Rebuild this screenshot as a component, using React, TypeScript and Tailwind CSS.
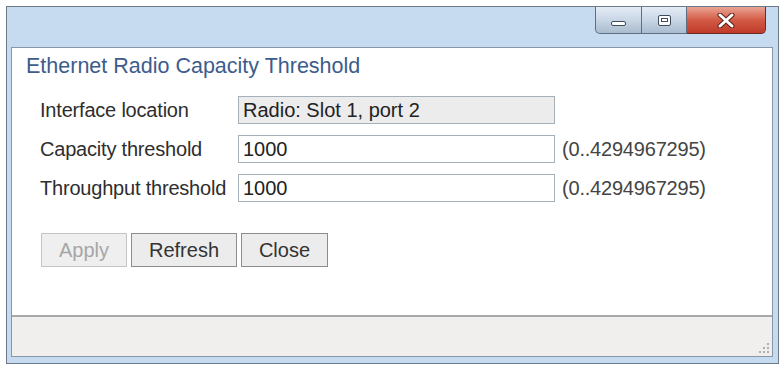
import React from 'react'

const font = { fontFamily: '"Liberation Sans", Arial, sans-serif' }

function TitleButtons() {
  return (
    <div className="flex h-[27px] self-start mr-[7px]">
      <div className="w-[47px] h-full rounded-bl-[5px] border border-t-0 border-[#5f6e80] bg-gradient-to-b from-[#e4ecf5] via-[#c9d6e5] to-[#a9bccf] flex items-center justify-center">
        <div className="w-[15px] h-[5px] mt-[6px] rounded-[2px] border border-[#3f4c5c] bg-white" />
      </div>
      <div className="w-[45px] h-full border-b border-r border-[#5f6e80] bg-gradient-to-b from-[#e4ecf5] via-[#c9d6e5] to-[#a9bccf] flex items-center justify-center">
        <div className="w-[13px] h-[11px] rounded-[2px] border border-[#3f4c5c] bg-white flex items-center justify-center">
          <div className="w-[7px] h-[4px] border border-[#3f4c5c]" />
        </div>
      </div>
      <div className="w-[79px] h-full rounded-br-[5px] border border-l-0 border-t-0 border-[#6b2a22] bg-gradient-to-b from-[#e9a394] via-[#d25a45] to-[#c0392a] flex items-center justify-center">
        <svg width="18" height="15" viewBox="0 0 18 15">
          <path d="M3 2 L15 13 M15 2 L3 13" stroke="#5a2018" strokeWidth="5" strokeLinecap="round" />
          <path d="M3 2 L15 13 M15 2 L3 13" stroke="#ffffff" strokeWidth="3" strokeLinecap="round" />
        </svg>
      </div>
    </div>
  )
}

function Row({ label, children }: { label: string; children: React.ReactNode }) {
  return (
    <div className="flex items-center h-[28px]">
      <div className="w-[198px] text-[20px] text-[#2e2e2e] whitespace-nowrap tracking-[-0.2px]">{label}</div>
      {children}
    </div>
  )
}

export default function App() {
  return (
    <div className="w-[782px] h-[367px] bg-white pt-[6px] pl-[6px] pr-[3px] pb-[3px]" style={font}>
      <div className="w-[773px] h-[358px] border border-[#6c7a8a] bg-[#c6dbf0] flex flex-col pl-[4px] pr-[5px] pb-[6px]">
        <div className="h-[40px] flex justify-end">
          <TitleButtons />
        </div>
        <div className="flex-1 flex flex-col border border-[#8896a6] bg-white">
          <div className="pt-[5px] pl-[14px] text-[21.5px] leading-[26px] text-[#3d5c8c]">
            Ethernet Radio Capacity Threshold
          </div>
          <div className="flex flex-col gap-[11px] pl-[28px] mt-[17px]">
            <Row label="Interface location">
              <div className="w-[317px] h-[28px] border border-[#a4b0ba] bg-[#ececec] px-[4px] flex items-center text-[20px] text-[#222222]">
                Radio: Slot 1, port 2
              </div>
            </Row>
            <Row label="Capacity threshold">
              <div className="w-[317px] h-[28px] border border-[#a4b0ba] bg-white px-[4px] flex items-center text-[20px] text-[#222222]">
                1000
              </div>
              <span className="ml-[7px] text-[20px] text-[#444444] tracking-[-0.2px]">(0..4294967295)</span>
            </Row>
            <Row label="Throughput threshold">
              <div className="w-[317px] h-[28px] border border-[#a4b0ba] bg-white px-[4px] flex items-center text-[20px] text-[#222222]">
                1000
              </div>
              <span className="ml-[7px] text-[20px] text-[#444444] tracking-[-0.2px]">(0..4294967295)</span>
            </Row>
          </div>
          <div className="flex gap-[4px] pl-[29px] mt-[31px]">
            <button className="w-[86px] h-[34px] border border-[#c4c4c4] bg-[#efefef] text-[20px] text-[#a6a6a6]">
              Apply
            </button>
            <button className="w-[106px] h-[34px] border border-[#8c8c8c] bg-[#ececec] text-[20px] text-[#333333]">
              Refresh
            </button>
            <button className="w-[87px] h-[34px] border border-[#8c8c8c] bg-[#ececec] text-[20px] text-[#333333]">
              Close
            </button>
          </div>
          <div className="flex-1" />
          <div className="h-[41px] border-t-2 border-[#a8a8a8] bg-[#f1eeee] flex justify-end items-end pr-[3px] pb-[3px]">
            <svg width="10" height="10" viewBox="0 0 10 10">
              <g fill="#b0b0b0">
                <rect x="8" y="0" width="2" height="2" />
                <rect x="4" y="4" width="2" height="2" />
                <rect x="8" y="4" width="2" height="2" />
                <rect x="0" y="8" width="2" height="2" />
                <rect x="4" y="8" width="2" height="2" />
                <rect x="8" y="8" width="2" height="2" />
              </g>
            </svg>
          </div>
        </div>
      </div>
    </div>
  )
}
